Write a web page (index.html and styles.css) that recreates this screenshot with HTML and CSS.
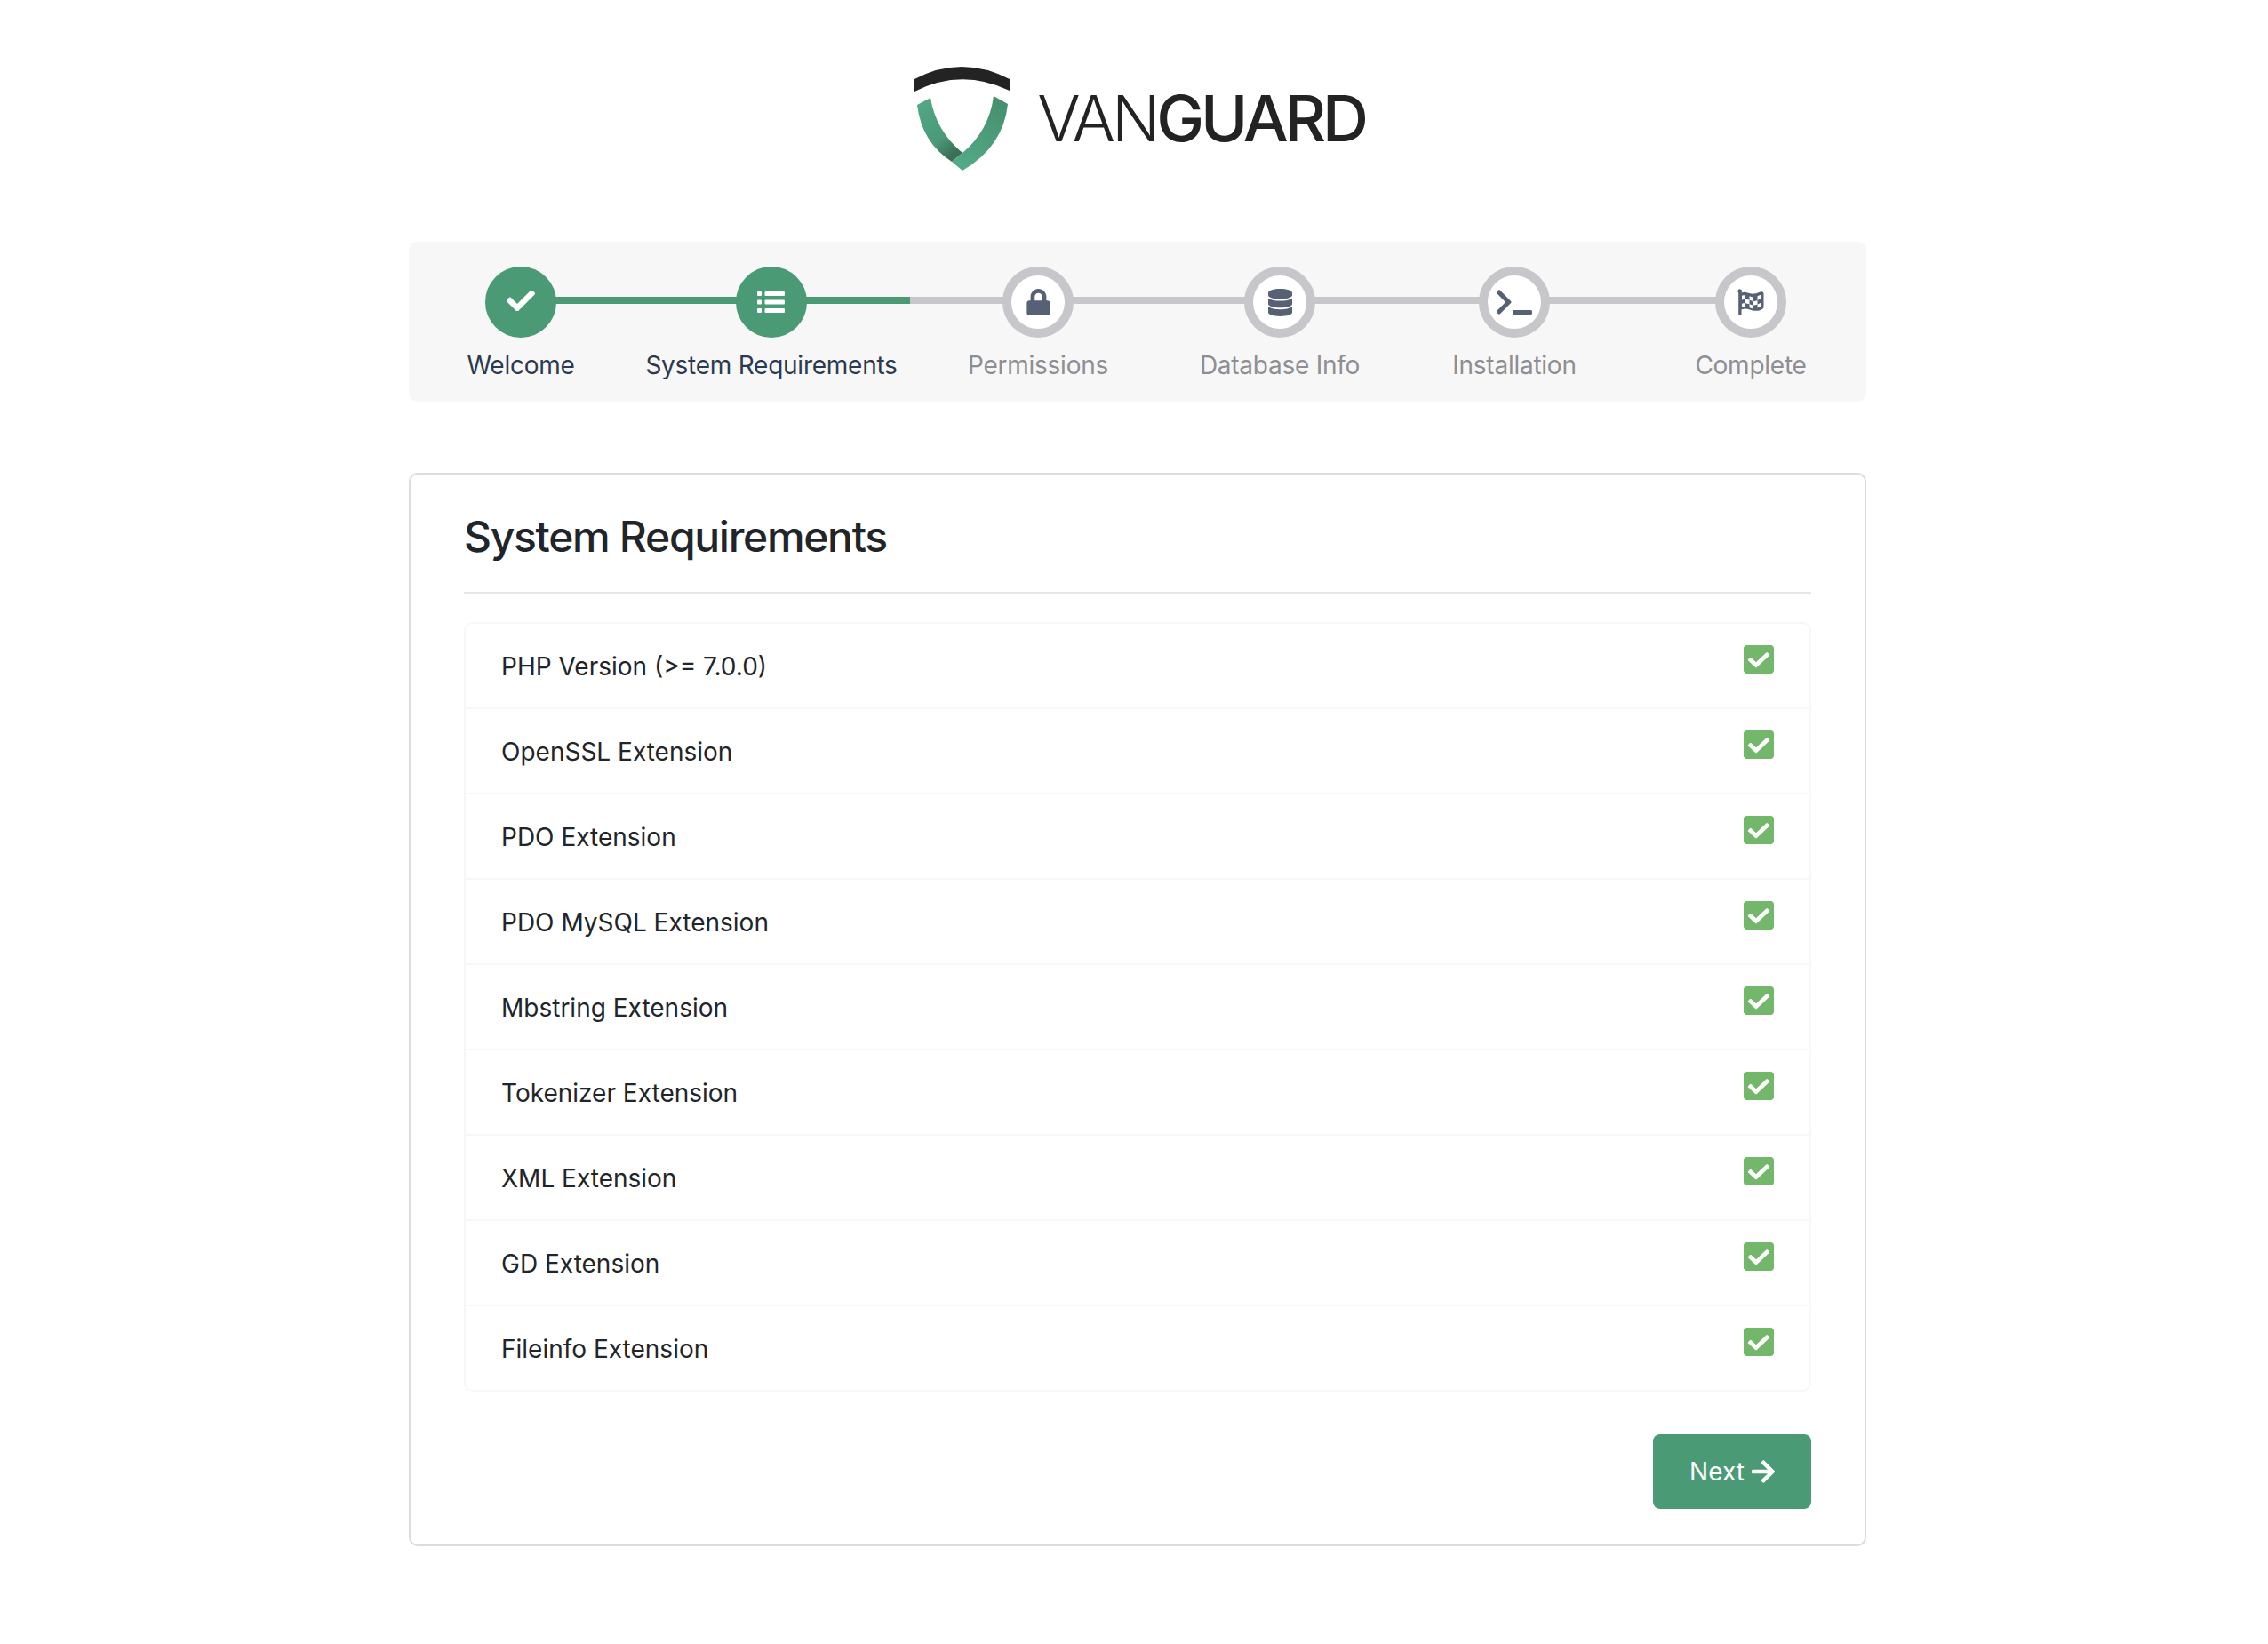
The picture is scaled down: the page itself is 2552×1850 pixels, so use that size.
FILE: index.html
```html
<!DOCTYPE html>
<html lang="en">
<head>
<meta charset="utf-8">
<title>Vanguard - System Requirements</title>
<link rel="stylesheet" href="styles.css">
</head>
<body>
<svg class="sprite" width="0" height="0" aria-hidden="true">
  <symbol id="i-check" viewBox="0 72 512 368"><path d="M173.898 439.404l-166.4-166.4c-9.997-9.997-9.997-26.206 0-36.204l36.203-36.204c9.997-9.998 26.207-9.998 36.204 0L192 312.69 432.095 72.596c9.997-9.997 26.207-9.997 36.204 0l36.203 36.204c9.997 9.997 9.997 26.206 0 36.204l-294.4 294.401c-9.998 9.997-26.207 9.997-36.204-.001z"/></symbol>
  <symbol id="i-square" viewBox="0 32 448 448" preserveAspectRatio="none"><path d="M400 480H48c-26.51 0-48-21.49-48-48V80c0-26.51 21.49-48 48-48h352c26.51 0 48 21.49 48 48v352c0 26.51-21.49 48-48 48zm-204.686-98.059l184-184c6.248-6.248 6.248-16.379 0-22.627l-22.627-22.627c-6.248-6.248-16.379-6.249-22.628 0L184 302.745l-70.059-70.059c-6.248-6.248-16.379-6.248-22.628 0l-22.627 22.627c-6.248 6.248-6.248 16.379 0 22.627l104 104c6.249 6.25 16.379 6.25 22.628.001z"/></symbol>
</svg>
<div class="page">
  <header class="brand">
    <svg class="shield" viewBox="0 0 108 118" width="108" height="118" aria-hidden="true">
      <defs>
        <linearGradient id="armL" x1="0" y1="0" x2="0.6" y2="1"><stop offset="0" stop-color="#54a985"/><stop offset="0.7" stop-color="#4a9a78"/><stop offset="1" stop-color="#3a6f58"/></linearGradient>
        <linearGradient id="armR" x1="0.8" y1="0" x2="0.3" y2="1"><stop offset="0" stop-color="#458f6e"/><stop offset="1" stop-color="#53aa86"/></linearGradient>
      </defs>
      <path fill="#232323" d="M0 14Q53 -14 107 14L107 27Q53 1 0 28Z"/>
      <path fill="url(#armL)" d="M3 43L18 35Q24 72 54 97L42 107Q8 85 3 43Z"/>
      <path fill="url(#armR)" d="M89 33L105 42Q100 90 54 117L42 107L54 97Q84 72 89 33Z"/>
    </svg>
    <div class="wordmark"><span class="wm-light">VAN</span><span class="wm-bold">GUARD</span></div>
  </header>

  <nav class="steps">
    <div class="step done first">
      <span class="dot">
        <svg class="ic ic-check" width="32" height="23"><use href="#i-check"/></svg>
      </span>
      <span class="label">Welcome</span>
    </div>
    <div class="step done">
      <span class="dot">
        <svg class="ic" width="32" height="24" viewBox="0 0 32 24"><rect x="0" y="0" width="5" height="5" rx="1"/><rect x="0" y="9.500" width="5" height="5" rx="1"/><rect x="0" y="19" width="5" height="5" rx="1"/><rect x="8.500" y="0" width="22.500" height="5" rx="1"/><rect x="8.500" y="9.500" width="22.500" height="5" rx="1"/><rect x="8.500" y="19" width="22.500" height="5" rx="1"/></svg>
      </span>
      <span class="label">System Requirements</span>
    </div>
    <div class="step">
      <span class="dot">
        <svg class="ic" width="27" height="30" viewBox="0 0 448 512"><path d="M400 224h-24v-72C376 68.2 307.8 0 224 0S72 68.2 72 152v72H48c-26.5 0-48 21.5-48 48v192c0 26.5 21.5 48 48 48h352c26.5 0 48-21.5 48-48V272c0-26.5-21.5-48-48-48zm-104 0H152v-72c0-39.7 32.3-72 72-72s72 32.3 72 72v72z"/></svg>
      </span>
      <span class="label">Permissions</span>
    </div>
    <div class="step">
      <span class="dot">
        <svg class="ic" width="27" height="31" viewBox="0 0 448 512"><path d="M448 73.143v45.714C448 159.143 347.667 192 224 192S0 159.143 0 118.857V73.143C0 32.857 100.333 0 224 0s224 32.857 224 73.143zM448 176v102.857C448 319.143 347.667 352 224 352S0 319.143 0 278.857V176c48.125 33.143 136.208 48.572 224 48.572S399.874 209.143 448 176zm0 160v102.857C448 479.143 347.667 512 224 512S0 479.143 0 438.857V336c48.125 33.143 136.208 48.572 224 48.572S399.874 369.143 448 336z"/></svg>
      </span>
      <span class="label">Database Info</span>
    </div>
    <div class="step">
      <span class="dot">
        <svg class="ic" width="40" height="32" viewBox="0 0 640 512"><path d="M257.981 272.971L63.638 467.314c-9.373 9.373-24.569 9.373-33.941 0L7.029 444.647c-9.357-9.357-9.375-24.522-.04-33.901L161.011 256 6.99 101.255c-9.335-9.379-9.317-24.544.04-33.901l22.667-22.667c9.373-9.373 24.569-9.373 33.941 0L257.981 239.03c9.373 9.372 9.373 24.568 0 33.941zM640 456v-32c0-13.255-10.745-24-24-24H312c-13.255 0-24 10.745-24 24v32c0 13.255 10.745 24 24 24h304c13.255 0 24-10.745 24-24z"/></svg>
      </span>
      <span class="label">Installation</span>
    </div>
    <div class="step last">
      <span class="dot">
        <svg class="ic" width="30" height="30" viewBox="0 0 30 30"><path d="M2.6 0.2a2.6 2.6 0 0 1 1.9 4.3C7 3.6 9 3.7 11.500 4.600C15.500 6 19 6.500 25.500 3.600C27.500 2.800 29.500 3.800 29.500 5.600V20.500C29.500 21.500 29 22 28.500 22.400C23 26 18 25 14 23.500C10.500 22.200 7 22 4.500 23.400V28.500C4.500 29.400 4 30 3 30H2.500C1.800 30 1.200 29.400 1.200 28.500V4.700A2.600 2.600 0 0 1 2.600 0.200Z"/><path class="flag-w" d="M9 7.300V11.600C7.500 11.700 6.400 12.100 5 12.700V7.800C6.400 7.300 7.500 7.200 9 7.300ZM13.500 8.300V12.700C11.900 12.400 10.500 11.700 9 11.600V16.200C10.500 16.300 11.900 17 13.500 17.300V12.700C15 13.100 16.400 13.700 18 14V9.500C16.400 9.300 15 8.700 13.500 8.300ZM18 14V18.600C19.700 18.500 21 18 22.500 17.400V12.900C21 13.500 19.700 14 18 14ZM22.500 8.200V12.900C23.800 12.400 25 11.900 26.200 11V6.700C25 7.300 23.800 7.800 22.500 8.200ZM5 16.700V21C6.400 20.400 7.500 20 9 19.900V16.200C7.500 16.300 6.400 16.200 5 16.700ZM13.500 17.300V21.300C15 21.700 16.400 22.300 18 22.500V18.600C16.400 18.400 15 17.800 13.500 17.300ZM22.500 17.400V21.500C23.800 21.100 25 20.600 26.200 19.700V15.700C25 16.300 23.800 17 22.500 17.400Z"/></svg>
      </span>
      <span class="label">Complete</span>
    </div>
  </nav>

  <main class="card">
    <h1 class="title">System Requirements</h1>
    <ul class="reqs">
      <li class="req"><span>PHP Version (&gt;= 7.0.0)</span><svg class="tick" width="34" height="32"><use href="#i-square"/></svg></li>
      <li class="req"><span>OpenSSL Extension</span><svg class="tick" width="34" height="32"><use href="#i-square"/></svg></li>
      <li class="req"><span>PDO Extension</span><svg class="tick" width="34" height="32"><use href="#i-square"/></svg></li>
      <li class="req"><span>PDO MySQL Extension</span><svg class="tick" width="34" height="32"><use href="#i-square"/></svg></li>
      <li class="req"><span>Mbstring Extension</span><svg class="tick" width="34" height="32"><use href="#i-square"/></svg></li>
      <li class="req"><span>Tokenizer Extension</span><svg class="tick" width="34" height="32"><use href="#i-square"/></svg></li>
      <li class="req"><span>XML Extension</span><svg class="tick" width="34" height="32"><use href="#i-square"/></svg></li>
      <li class="req"><span>GD Extension</span><svg class="tick" width="34" height="32"><use href="#i-square"/></svg></li>
      <li class="req"><span>Fileinfo Extension</span><svg class="tick" width="34" height="32"><use href="#i-square"/></svg></li>
    </ul>
    <div class="actions">
      <a class="btn" href="#">Next
        <svg class="btn-ic" width="26" height="30" viewBox="0 0 448 512"><path d="M190.5 66.9l22.2-22.2c9.4-9.4 24.6-9.4 33.9 0L441 239c9.4 9.4 9.4 24.6 0 33.9L246.6 467.3c-9.4 9.4-24.6 9.4-33.9 0l-22.2-22.2c-9.5-9.5-9.3-25 .4-34.3L311.4 296H24c-13.3 0-24-10.7-24-24v-32c0-13.3 10.7-24 24-24h287.4L190.9 101.2c-9.8-9.3-10-24.8-.4-34.3z"/></svg>
      </a>
    </div>
  </main>
</div>
</body>
</html>
```
FILE: styles.css
```css
* { box-sizing: border-box; }
html, body { margin: 0; padding: 0; background: #fff; }
body { font-family: Inter, "Noto Sans", "Liberation Sans", sans-serif; color: #212529; }
.sprite { display: block; }
.page { width: 1640px; margin-left: 460px; padding-bottom: 110px; }

.brand { height: 272px; padding-top: 75px; display: flex; align-items: flex-start; justify-content: center; gap: 30px; padding-left: 5px; }
.shield { display: block; flex: none; }
.wordmark { font-size: 72px; line-height: 116px; letter-spacing: -4.2px; color: #232323; white-space: nowrap; }
.wm-light { font-weight: 300; }
.wm-bold { font-weight: 500; }

.steps { height: 180px; padding-top: 28px; background: #f7f7f7; border-radius: 10px; display: grid; grid-template-columns: 252px 312px 288px 256px 272px 260px; }
.step { position: relative; display: flex; flex-direction: column; align-items: center; }
.step::before { content: ""; position: absolute; top: 34px; left: 0; right: 0; height: 8px; background: #c7c6cb; }
.step.first::before { left: 50%; }
.step.last::before { right: 50%; }
.step.done::before { background: #4a9a76; }
.dot { position: relative; width: 80px; height: 80px; border-radius: 50%; background: #fff; border: 10px solid #c7c6cb; display: flex; align-items: center; justify-content: center; }
.done .dot { background: #4a9a76; border-color: #4a9a76; }
.ic { fill: #566176; display: block; }
.ic-check { margin-bottom: 4px; }
.done .ic { fill: #fff; }
.flag-w { fill: #fff; }
.label { margin-top: 9px; font-size: 28px; line-height: 44px; letter-spacing: -0.25px; color: #8e8e93; white-space: nowrap; }
.done .label { color: #2c3a4f; }

.card { margin-top: 80px; height: 1208px; border: 2px solid #dcdcdc; border-radius: 10px; padding: 0 60px 40px; display: flex; flex-direction: column; }
.title { margin: 0; height: 134px; padding-top: 40px; border-bottom: 2px solid #e5e5e5; font-size: 48px; line-height: 60px; font-weight: 500; letter-spacing: -1.3px; color: #212529; }
.reqs { list-style: none; margin: 32px 0 0; padding: 0; border: 2px solid #f7f7f7; border-radius: 10px; }
.req { height: 96px; padding: 26px 40px 0; display: flex; justify-content: space-between; align-items: flex-start; font-size: 28px; line-height: 44px; color: #212529; border-bottom: 2px solid #f7f7f7; }
.req:last-child { height: 94px; border-bottom: 0; }
.tick { fill: #72b76a; display: block; flex: none; margin-top: -2px; }
.actions { margin-top: 48px; display: flex; justify-content: flex-end; }
.btn { width: 178px; height: 84px; background: #4a9a76; border-radius: 8px; color: #fff; font-size: 28px; font-weight: 400; text-decoration: none; display: flex; align-items: center; justify-content: center; gap: 8px; }
.btn-ic { fill: #fff; display: block; }
```
